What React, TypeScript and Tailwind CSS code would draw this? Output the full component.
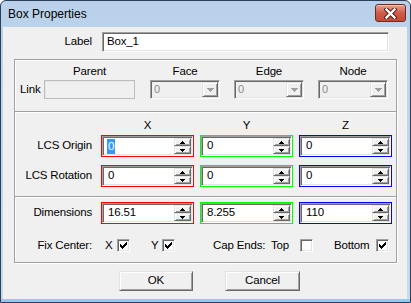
import React from "react";

const sunken =
  "border border-t-[#a0a0a0] border-l-[#a0a0a0] border-b-white border-r-white shadow-[inset_1px_1px_0_#696969,inset_-1px_-1px_0_#e3e3e3] p-px";
const raised =
  "border border-t-[#e3e3e3] border-l-[#e3e3e3] border-b-[#696969] border-r-[#696969] shadow-[inset_1px_1px_0_#ffffff,inset_-1px_-1px_0_#a0a0a0] bg-[#f0f0f0]";

function Arrow({ up, color = "#000" }: { up?: boolean; color?: string }) {
  // small pixel arrow, 5x3
  return (
    <svg width="5" height="3" viewBox="0 0 5 3" shapeRendering="crispEdges" fill={color}>
      {up ? (
        <>
          <rect x="2" y="0" width="1" height="1" />
          <rect x="1" y="1" width="3" height="1" />
          <rect x="0" y="2" width="5" height="1" />
        </>
      ) : (
        <>
          <rect x="0" y="0" width="5" height="1" />
          <rect x="1" y="1" width="3" height="1" />
          <rect x="2" y="2" width="1" height="1" />
        </>
      )}
    </svg>
  );
}

function Spin({ value, frame, selected }: { value: string; frame: string; selected?: boolean }) {
  return (
    <div className={`w-[93px] h-[22px] border ${frame}`}>
      <div className={`flex h-full bg-white ${sunken}`}>
        <div className="flex-1 flex items-center pl-[3px] text-[11.5px] text-black">
          {selected ? (
            <span className="bg-[#3399ff] text-white h-[15px] px-px leading-[15px]">{value}</span>
          ) : (
            <span className="pl-px">{value}</span>
          )}
        </div>
        <div className="w-[17px] flex flex-col">
          <div className={`h-[8px] flex items-center justify-center ${raised}`}>
            <Arrow up />
          </div>
          <div className={`h-[8px] flex items-center justify-center ${raised}`}>
            <Arrow />
          </div>
        </div>
      </div>
    </div>
  );
}

function Combo() {
  return (
    <div className={`w-[70px] h-[19px] flex bg-[#f0f0f0] ${sunken}`}>
      <div className="flex-1 flex items-center pl-[2px] text-[11px] text-[#8a8a8a]">0</div>
      <div className={`w-[16px] flex items-center justify-center ${raised}`}>
        <svg width="7" height="4" viewBox="0 0 7 4" shapeRendering="crispEdges" fill="#a0a0a0">
          <rect x="0" y="0" width="7" height="1" />
          <rect x="1" y="1" width="5" height="1" />
          <rect x="2" y="2" width="3" height="1" />
          <rect x="3" y="3" width="1" height="1" />
        </svg>
      </div>
    </div>
  );
}

function Check({ checked }: { checked?: boolean }) {
  return (
    <div className={`w-[13px] h-[13px] bg-white ${sunken} p-0`}>
      {checked && (
        <svg width="9" height="9" viewBox="0 0 9 9" shapeRendering="crispEdges" fill="#000">
          <rect x="7" y="1" width="1" height="1" />
          <rect x="6" y="2" width="2" height="1" />
          <rect x="1" y="3" width="1" height="1" />
          <rect x="5" y="3" width="3" height="1" />
          <rect x="1" y="4" width="2" height="1" />
          <rect x="4" y="4" width="3" height="1" />
          <rect x="1" y="5" width="5" height="1" />
          <rect x="2" y="6" width="3" height="1" />
          <rect x="3" y="7" width="1" height="1" />
        </svg>
      )}
    </div>
  );
}

function Button({ label, w }: { label: string; w: string }) {
  return (
    <div className={`${w} h-[20px] flex items-center justify-center text-[11.5px] text-black ${raised}`}>
      {label}
    </div>
  );
}

const red = "border-[#ff0000]";
const green = "border-[#00ff00]";
const blue = "border-[#0000ff]";

export default function App() {
  return (
    <div className="w-[411px] h-[303px] font-['Liberation_Sans',Arial,sans-serif] text-[11px] tracking-[-0.15px] text-black">
      <div className="w-[411px] h-[303px] flex flex-col border border-[#2b3f56] rounded-t-[6px] bg-gradient-to-b from-[#b9d1ea] to-[#c7dbf0] overflow-hidden">
        {/* Title bar */}
        <div className="h-[26px] flex items-start">
          <div className="pl-[7px] pt-[6px] text-[12px] leading-[14px] tracking-normal text-black">Box Properties</div>
          <div className="ml-auto mr-[4px] mt-[3px] w-[31px] h-[18px] rounded-[3px] border border-[#6e2a22] bg-gradient-to-b from-[#e7a191] via-[#cf5c47] to-[#c44a33] shadow-[inset_0_1px_0_#f3c4b8] flex items-center justify-center">
            <svg width="13" height="11" viewBox="0 0 13 11">
              <path d="M2.5 1.5 L10.5 9.5 M10.5 1.5 L2.5 9.5" stroke="#4d1710" strokeWidth="4.2" strokeLinecap="square" />
              <path d="M2.5 1.5 L10.5 9.5 M10.5 1.5 L2.5 9.5" stroke="#ffffff" strokeWidth="2.4" strokeLinecap="square" />
            </svg>
          </div>
        </div>

        {/* Client area */}
        <div className="ml-[2px] w-[404px] h-[272px] bg-[#f0f0f0] flex flex-col">
          {/* Label row */}
          <div className="mt-[5px] flex items-center h-[20px]">
            <div className="ml-[11px] w-[78px] text-right text-[11.5px]">Label</div>
            <div className={`ml-[10px] w-[287px] h-[20px] bg-white flex items-center pl-[4px] text-[11.5px] ${sunken}`}>
              Box_1
            </div>
          </div>

          {/* Group boxes */}
          <div className="mt-[7px] ml-[11px] w-[383px] border border-[#a0a0a0] shadow-[inset_1px_1px_0_#ffffff,1px_1px_0_#ffffff] text-[11.5px]">
            {/* Link section */}
            <div className="pt-[5px] pb-[12px] pl-[5px] flex items-end">
              <div className="w-[24px] h-[19px] flex items-center">Link</div>
              <div className="flex flex-col items-center">
                <div className="h-[12px] leading-[12px] mb-[3px]">Parent</div>
                <div className="w-[91px] h-[19px] bg-[#f0f0f0] border border-[#bcbcbc] shadow-[inset_1px_1px_0_#e6e6e6]" />
              </div>
              <div className="ml-[15px] flex flex-col items-center">
                <div className="h-[12px] leading-[12px] mb-[3px]">Face</div>
                <Combo />
              </div>
              <div className="ml-[14px] flex flex-col items-center">
                <div className="h-[12px] leading-[12px] mb-[3px]">Edge</div>
                <Combo />
              </div>
              <div className="ml-[14px] flex flex-col items-center">
                <div className="h-[12px] leading-[12px] mb-[3px]">Node</div>
                <Combo />
              </div>
            </div>

            {/* LCS section */}
            <div className="border-t border-t-[#a0a0a0] shadow-[inset_0_1px_0_#ffffff] pt-[7px] pb-[9px] flex flex-col">
              <div className="flex h-[12px] leading-[12px]">
                <div className="w-[86px]" />
                <div className="w-[93px] text-center">X</div>
                <div className="ml-[6px] w-[93px] text-center">Y</div>
                <div className="ml-[6px] w-[93px] text-center">Z</div>
              </div>
              <div className="mt-[4px] flex items-center">
                <div className="w-[77px] text-right">LCS Origin</div>
                <div className="ml-[9px] flex gap-[6px]">
                  <Spin value="0" frame={red} selected />
                  <Spin value="0" frame={green} />
                  <Spin value="0" frame={blue} />
                </div>
              </div>
              <div className="mt-[8px] flex items-center">
                <div className="w-[77px] text-right">LCS Rotation</div>
                <div className="ml-[9px] flex gap-[6px]">
                  <Spin value="0" frame={red} />
                  <Spin value="0" frame={green} />
                  <Spin value="0" frame={blue} />
                </div>
              </div>
            </div>

            {/* Dimensions section */}
            <div className="border-t border-t-[#a0a0a0] shadow-[inset_0_1px_0_#ffffff] pt-[5px] pb-[10px] flex flex-col">
              <div className="flex items-center">
                <div className="w-[77px] text-right">Dimensions</div>
                <div className="ml-[9px] flex gap-[6px]">
                  <Spin value="16.51" frame={red} />
                  <Spin value="8.255" frame={green} />
                  <Spin value="110" frame={blue} />
                </div>
              </div>
              <div className="mt-[15px] flex items-center h-[13px]">
                <div className="w-[77px] text-right">Fix Center:</div>
                <div className="ml-[13px] w-[12px]">X</div>
                <Check checked />
                <div className="ml-[21px] w-[11px]">Y</div>
                <Check checked />
                <div className="ml-[38px] w-[58px]">Cap Ends:</div>
                <div className="w-[29px]">Top</div>
                <Check />
                <div className="ml-[21px] w-[42px]">Bottom</div>
                <Check checked />
              </div>
            </div>
          </div>

          {/* Buttons */}
          <div className="mt-[8px] ml-[116px] flex gap-[32px]">
            <Button label="OK" w="w-[74px]" />
            <Button label="Cancel" w="w-[75px]" />
          </div>
        </div>
        <div className="flex-1 bg-[#8fcdf0]" />
      </div>
    </div>
  );
}
